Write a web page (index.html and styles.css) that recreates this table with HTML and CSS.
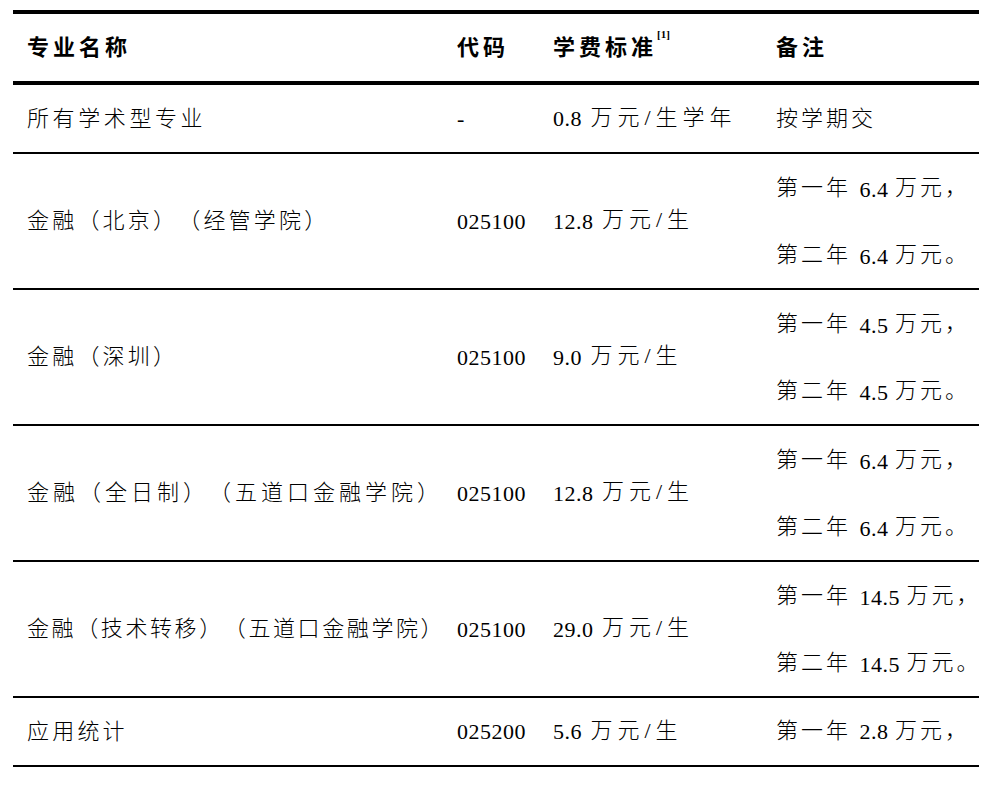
FILE: index.html
```html
<!DOCTYPE html>
<html lang="zh-CN">
<head>
<meta charset="utf-8">
<title>学费标准</title>
<link rel="stylesheet" href="styles.css">
</head>
<body>
<table class="fees">
  <colgroup>
    <col class="c-name">
    <col class="c-code">
    <col class="c-fee">
    <col class="c-note">
  </colgroup>
  <thead>
    <tr>
      <th class="name">专业名称</th>
      <th>代码</th>
      <th>学费标准<sup class="ref">[1]</sup></th>
      <th>备注</th>
    </tr>
  </thead>
  <tbody>
    <tr class="single">
      <td class="name wide">所有学术型专业</td>
      <td class="code"><span class="n">-</span></td>
      <td class="fee"><span class="n">0.8</span> 万元/生学年</td>
      <td class="note">按学期交</td>
    </tr>
    <tr class="double">
      <td class="name">金融（北京）（经管学院）</td>
      <td class="code"><span class="n">025100</span></td>
      <td class="fee"><span class="n">12.8</span> 万元/生</td>
      <td class="note two"><div class="line">第一年 <span class="n">6.4</span> 万元，</div><div class="line">第二年 <span class="n">6.4</span> 万元。</div></td>
    </tr>
    <tr class="double">
      <td class="name">金融（深圳）</td>
      <td class="code"><span class="n">025100</span></td>
      <td class="fee"><span class="n">9.0</span> 万元/生</td>
      <td class="note two"><div class="line">第一年 <span class="n">4.5</span> 万元，</div><div class="line">第二年 <span class="n">4.5</span> 万元。</div></td>
    </tr>
    <tr class="double">
      <td class="name mid">金融（全日制）（五道口金融学院）</td>
      <td class="code"><span class="n">025100</span></td>
      <td class="fee"><span class="n">12.8</span> 万元/生</td>
      <td class="note two"><div class="line">第一年 <span class="n">6.4</span> 万元，</div><div class="line">第二年 <span class="n">6.4</span> 万元。</div></td>
    </tr>
    <tr class="double">
      <td class="name tight">金融（技术转移）（五道口金融学院）</td>
      <td class="code"><span class="n">025100</span></td>
      <td class="fee"><span class="n">29.0</span> 万元/生</td>
      <td class="note two"><div class="line">第一年 <span class="n">14.5</span> 万元，</div><div class="line">第二年 <span class="n">14.5</span> 万元。</div></td>
    </tr>
    <tr class="single">
      <td class="name">应用统计</td>
      <td class="code"><span class="n">025200</span></td>
      <td class="fee"><span class="n">5.6</span> 万元/生</td>
      <td class="note">第一年 <span class="n">2.8</span> 万元，</td>
    </tr>
  </tbody>
</table>
</body>
</html>
```

FILE: styles.css
```css
html, body {
  margin: 0;
  padding: 0;
  background: #ffffff;
}

body {
  padding: 10px 0 0 13px;
  font-family: "Liberation Serif", "Noto Sans CJK SC", serif;
  font-size: 22px;
  color: #000;
  text-spacing-trim: space-all;
}

.fees {
  border-collapse: collapse;
  table-layout: fixed;
  width: 966px;
  border-top: 4px solid #000;
}

.c-name { width: 430px; }
.c-code { width: 96px; }
.c-fee { width: 223px; }
.c-note { width: 217px; }

.fees th,
.fees td {
  padding: 0 0 6px 14px;
  text-align: left;
  vertical-align: middle;
  white-space: nowrap;
  letter-spacing: 3px;
  font-weight: 300;
  text-spacing-trim: space-all;
}

.fees th {
  height: 61px;
  font-weight: 700;
  letter-spacing: 4px;
  border-bottom: 4px solid #000;
}

.ref {
  font-family: "Liberation Serif", serif;
  font-size: 11px;
  font-weight: 700;
  letter-spacing: 0;
  vertical-align: top;
  position: relative;
  top: -1px;
}

.fees td {
  border-bottom: 2px solid #000;
}

.single td {
  height: 61px;
}

.double td {
  height: 128px;
}

.fees td.code {
  padding-bottom: 0;
}

.single td.code { height: 67px; }
.double td.code { height: 134px; }

.fees td.name { letter-spacing: 3.2px; }
.fees td.wide { letter-spacing: 3.6px; }
.fees td.mid { letter-spacing: 4px; }
.fees td.tight { letter-spacing: 2.6px; }

.fees td.fee { letter-spacing: 5px; }
.fees td.note { letter-spacing: 3px; }

.fees td.two {
  padding-bottom: 0;
  height: 134px;
}

.line {
  height: 67px;
  line-height: 67px;
}

.n {
  font-family: "Liberation Serif", "Times New Roman", serif;
  letter-spacing: 0.5px;
  font-weight: 400;
  margin-right: -2px;
  vertical-align: -1.5px;
}
```
